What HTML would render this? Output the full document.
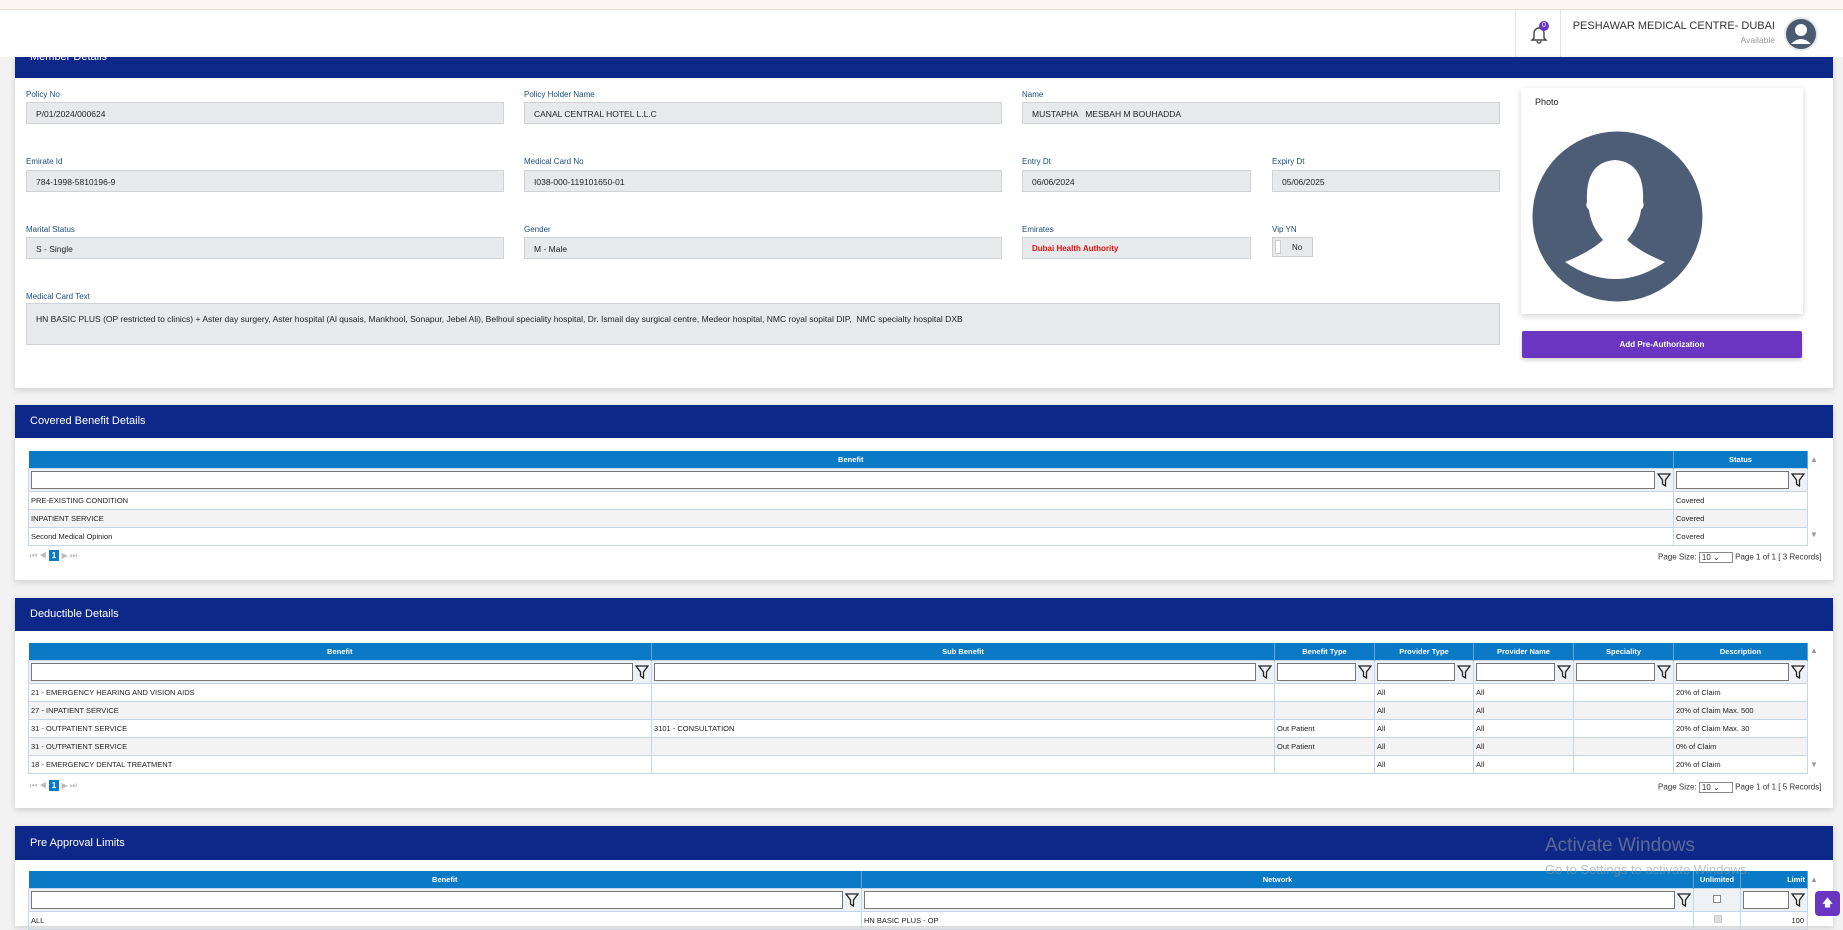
<!DOCTYPE html>
<html><head><meta charset="utf-8"><style>
*{box-sizing:border-box;margin:0;padding:0}
body{width:1843px;height:926px;overflow:hidden;background:#f2f2f2;font-family:"Liberation Sans",sans-serif;position:relative;color:#222}
.a{position:absolute}
.card{position:absolute;left:15px;width:1818px;background:#fff;box-shadow:0 2px 6px rgba(0,0,0,.15)}
.hd{position:absolute;left:15px;width:1818px;background:#0e288a;color:#fff;font-size:11px;padding-left:15px}
.lbl{position:absolute;font-size:8px;color:#1d4f7a}
.inp{position:absolute;height:22px;background:#e8e9eb;border:1px solid #cfd3d8;font-size:8.5px;padding:6px 9px;color:#222;white-space:nowrap}
table{position:absolute;border-collapse:collapse;table-layout:fixed;font-size:7.5px}
th{background:#0a7ac6;color:#fff;font-size:7.5px;height:17px;border-right:1px solid #5ea6dc;font-weight:bold}
td{border:1px solid #c4d6ea;height:18px;padding-left:2px;white-space:nowrap;overflow:hidden}
tr.f td{background:#eef2f6;height:22px;padding:2px}
tr.g td{background:#f3f3f3}
.fi{display:flex;align-items:center;gap:2px}
.fi span{flex:1;height:18px;border:1px solid #777;background:#fff}
.fi svg{width:14px;height:14px}
.pg{position:absolute;font-size:8px;color:#333}
.sel{display:inline-block;width:34px;height:11px;border:1px solid #888;vertical-align:middle;font-size:8px;padding-left:2px}
</style></head><body>
<div class="a" style="left:0;top:0;width:1843px;height:10px;background:#fdf5f3;border-bottom:1px solid #f0dcd6"></div>
<div class="a" style="left:0;top:10px;width:1843px;height:47px;background:#fff"></div>
<div class="a" style="left:1515px;top:10px;width:1px;height:47px;background:#e3e3e3"></div>
<div class="a" style="left:1560px;top:10px;width:1px;height:47px;background:#e3e3e3"></div>
<svg class="a" style="left:1530px;top:24px" width="18" height="20" viewBox="0 0 18 20"><path d="M4 14V9a5 5 0 0 1 10 0v5l2 2H2z M7 17a2 2 0 0 0 4 0" fill="none" stroke="#444" stroke-width="1.4"/></svg>
<div class="a" style="left:1539px;top:21px;width:10px;height:10px;border-radius:50%;background:#6a35c0;color:#fff;font-size:7px;text-align:center;line-height:10px">0</div>
<div class="a" style="left:1540px;top:20px;width:235px;text-align:right;font-size:11px;color:#333;white-space:nowrap">PESHAWAR MEDICAL CENTRE- DUBAI</div>
<div class="a" style="left:1677px;top:35px;width:98px;text-align:right;font-size:8.5px;color:#999">Available</div>
<svg class="a" style="left:1784px;top:17px" width="34" height="34" viewBox="0 0 34 34"><circle cx="17" cy="17" r="16" fill="#4a5a70" stroke="#e6e6e6" stroke-width="2"/><circle cx="17" cy="13" r="6" fill="#fff"/><path d="M7 27q10-10 20 0" fill="#fff"/></svg>

<div class="card" style="top:57px;height:331px"></div>
<div class="hd" style="top:57px;height:21px;overflow:hidden"><span style="position:relative;top:-6px;display:block;line-height:12px">Member Details</span></div>
<div class="lbl" style="left:26px;top:90px">Policy No</div><div class="inp" style="left:26px;top:102px;width:478px">P/01/2024/000624</div>
<div class="lbl" style="left:524px;top:90px">Policy Holder Name</div><div class="inp" style="left:524px;top:102px;width:478px">CANAL CENTRAL HOTEL L.L.C</div>
<div class="lbl" style="left:1022px;top:90px">Name</div><div class="inp" style="left:1022px;top:102px;width:478px">MUSTAPHA &nbsp; MESBAH M BOUHADDA</div>
<div class="lbl" style="left:26px;top:157px">Emirate Id</div><div class="inp" style="left:26px;top:170px;width:478px">784-1998-5810196-9</div>
<div class="lbl" style="left:524px;top:157px">Medical Card No</div><div class="inp" style="left:524px;top:170px;width:478px">I038-000-119101650-01</div>
<div class="lbl" style="left:1022px;top:157px">Entry Dt</div><div class="inp" style="left:1022px;top:170px;width:229px">06/06/2024</div>
<div class="lbl" style="left:1272px;top:157px">Expiry Dt</div><div class="inp" style="left:1272px;top:170px;width:228px">05/06/2025</div>
<div class="lbl" style="left:26px;top:225px">Marital Status</div><div class="inp" style="left:26px;top:237px;width:478px">S - Single</div>
<div class="lbl" style="left:524px;top:225px">Gender</div><div class="inp" style="left:524px;top:237px;width:478px">M - Male</div>
<div class="lbl" style="left:1022px;top:225px">Emirates</div><div class="inp" style="left:1022px;top:237px;width:229px;color:#e01010;font-weight:bold;font-size:8px">Dubai Health Authority</div>
<div class="lbl" style="left:1272px;top:225px">Vip YN</div>
<div class="a" style="left:1272px;top:237px;width:41px;height:20px;border:1px solid #ccc;background:#e8e9eb;font-size:8px;padding:5px 0 0 19px">No<span class="a" style="left:2px;top:2px;width:6px;height:14px;background:#fff;border:1px solid #ccc"></span></div>
<div class="lbl" style="left:26px;top:292px">Medical Card Text</div>
<div class="inp" style="left:26px;top:303px;width:1474px;height:42px;padding-top:10px">HN BASIC PLUS (OP restricted to clinics) + Aster day surgery, Aster hospital (Al qusais, Mankhool, Sonapur, Jebel Ali), Belhoul speciality hospital, Dr. Ismail day surgical centre, Medeor hospital, NMC royal sopital DIP, &nbsp;NMC specialty hospital DXB</div>
<div class="a" style="left:1521px;top:88px;width:282px;height:226px;background:#fff;box-shadow:0 2px 6px rgba(0,0,0,.18)"></div>
<div class="a" style="left:1535px;top:97px;font-size:9px">Photo</div>
<svg class="a" style="left:1532px;top:131px" width="171" height="171" viewBox="0 0 171 171"><circle cx="85.5" cy="85.5" r="85" fill="#4c5d75"/><path d="M33 131q25-10 38-22q-12-14-14-30q-4-4-2-8q-2-40 28-42q30 2 28 42q2 4-2 8q-2 16-14 30q13 12 38 22q-50 34-100 0z" fill="#fff"/></svg>
<div class="a" style="left:1522px;top:331px;width:280px;height:27px;background:#6a35c0;color:#fff;font-size:8px;font-weight:bold;text-align:center;line-height:27px;border-radius:2px;box-shadow:0 2px 4px rgba(0,0,0,.2)">Add Pre-Authorization</div>

<!-- Covered -->
<div class="card" style="top:405px;height:175px"></div>
<div class="hd" style="top:405px;height:33px;line-height:33px">Covered Benefit Details</div>
<table style="left:28px;top:451px;width:1779px">
<colgroup><col style="width:1645px"><col style="width:134px"></colgroup>
<tr><th>Benefit</th><th>Status</th></tr>
<tr class="f"><td><div class="fi"><span></span><svg viewBox="0 0 14 14"><path d="M1 1h12L8.5 7v6L5.5 11V7z" fill="none" stroke="#222" stroke-width="1.3"/></svg></div></td><td><div class="fi"><span></span><svg viewBox="0 0 14 14"><path d="M1 1h12L8.5 7v6L5.5 11V7z" fill="none" stroke="#222" stroke-width="1.3"/></svg></div></td></tr>
<tr><td>PRE-EXISTING CONDITION</td><td>Covered</td></tr>
<tr class="g"><td>INPATIENT SERVICE</td><td>Covered</td></tr>
<tr><td>Second Medical Opinion</td><td>Covered</td></tr>
</table>
<div class="a" style="left:1810px;top:455px;font-size:8px;color:#999">▲</div>
<div class="a" style="left:1810px;top:530px;font-size:8px;color:#999">▼</div>
<div class="pg" style="left:30px;top:551px;color:#bbb">⏮ ◀ <span style="background:#0a7ac6;color:#fff;padding:1px 3px;font-weight:bold">1</span> ▶ ⏭</div>
<div class="pg" style="left:1658px;top:552px">Page Size: <span class="sel">10 ⌄</span> Page 1 of 1 [ 3 Records]</div>

<!-- Deductible -->
<div class="card" style="top:598px;height:210px"></div>
<div class="hd" style="top:598px;height:33px;line-height:33px">Deductible Details</div>
<table style="left:28px;top:643px;width:1779px">
<colgroup><col style="width:623px"><col style="width:623px"><col style="width:100px"><col style="width:99px"><col style="width:100px"><col style="width:100px"><col style="width:134px"></colgroup>
<tr><th>Benefit</th><th>Sub Benefit</th><th>Benefit Type</th><th>Provider Type</th><th>Provider Name</th><th>Speciality</th><th>Description</th></tr>
<tr class="f"><td><div class="fi"><span></span><svg viewBox="0 0 14 14"><path d="M1 1h12L8.5 7v6L5.5 11V7z" fill="none" stroke="#222" stroke-width="1.3"/></svg></div></td><td><div class="fi"><span></span><svg viewBox="0 0 14 14"><path d="M1 1h12L8.5 7v6L5.5 11V7z" fill="none" stroke="#222" stroke-width="1.3"/></svg></div></td><td><div class="fi"><span></span><svg viewBox="0 0 14 14"><path d="M1 1h12L8.5 7v6L5.5 11V7z" fill="none" stroke="#222" stroke-width="1.3"/></svg></div></td><td><div class="fi"><span></span><svg viewBox="0 0 14 14"><path d="M1 1h12L8.5 7v6L5.5 11V7z" fill="none" stroke="#222" stroke-width="1.3"/></svg></div></td><td><div class="fi"><span></span><svg viewBox="0 0 14 14"><path d="M1 1h12L8.5 7v6L5.5 11V7z" fill="none" stroke="#222" stroke-width="1.3"/></svg></div></td><td><div class="fi"><span></span><svg viewBox="0 0 14 14"><path d="M1 1h12L8.5 7v6L5.5 11V7z" fill="none" stroke="#222" stroke-width="1.3"/></svg></div></td><td><div class="fi"><span></span><svg viewBox="0 0 14 14"><path d="M1 1h12L8.5 7v6L5.5 11V7z" fill="none" stroke="#222" stroke-width="1.3"/></svg></div></td></tr>
<tr><td>21 - EMERGENCY HEARING AND VISION AIDS</td><td></td><td></td><td>All</td><td>All</td><td></td><td>20% of Claim</td></tr>
<tr class="g"><td>27 - INPATIENT SERVICE</td><td></td><td></td><td>All</td><td>All</td><td></td><td>20% of Claim Max. 500</td></tr>
<tr><td>31 - OUTPATIENT SERVICE</td><td>3101 - CONSULTATION</td><td>Out Patient</td><td>All</td><td>All</td><td></td><td>20% of Claim Max. 30</td></tr>
<tr class="g"><td>31 - OUTPATIENT SERVICE</td><td></td><td>Out Patient</td><td>All</td><td>All</td><td></td><td>0% of Claim</td></tr>
<tr><td>18 - EMERGENCY DENTAL TREATMENT</td><td></td><td></td><td>All</td><td>All</td><td></td><td>20% of Claim</td></tr>
</table>
<div class="a" style="left:1810px;top:646px;font-size:8px;color:#999">▲</div>
<div class="a" style="left:1810px;top:760px;font-size:8px;color:#999">▼</div>
<div class="pg" style="left:30px;top:781px;color:#bbb">⏮ ◀ <span style="background:#0a7ac6;color:#fff;padding:1px 3px;font-weight:bold">1</span> ▶ ⏭</div>
<div class="pg" style="left:1658px;top:782px">Page Size: <span class="sel">10 ⌄</span> Page 1 of 1 [ 5 Records]</div>

<!-- Pre approval -->
<div class="card" style="top:826px;height:100px"></div>
<div class="hd" style="top:826px;height:34px;line-height:34px">Pre Approval Limits</div>
<table style="left:28px;top:871px;width:1779px">
<colgroup><col style="width:833px"><col style="width:832px"><col style="width:47px"><col style="width:67px"></colgroup>
<tr><th>Benefit</th><th>Network</th><th>Unlimited</th><th style="text-align:right;padding-right:2px">Limit</th></tr>
<tr class="f"><td><div class="fi"><span></span><svg viewBox="0 0 14 14"><path d="M1 1h12L8.5 7v6L5.5 11V7z" fill="none" stroke="#222" stroke-width="1.3"/></svg></div></td><td><div class="fi"><span></span><svg viewBox="0 0 14 14"><path d="M1 1h12L8.5 7v6L5.5 11V7z" fill="none" stroke="#222" stroke-width="1.3"/></svg></div></td><td style="text-align:center"><span style="display:inline-block;width:8px;height:8px;border:1px solid #888;background:#fff"></span></td><td><div class="fi"><span></span><svg viewBox="0 0 14 14"><path d="M1 1h12L8.5 7v6L5.5 11V7z" fill="none" stroke="#222" stroke-width="1.3"/></svg></div></td></tr>
<tr><td>ALL</td><td>HN BASIC PLUS - OP</td><td style="text-align:center"><span style="display:inline-block;width:8px;height:8px;border:1px solid #ccc;background:#ddd"></span></td><td style="text-align:right;padding-right:3px">100</td></tr>
</table>
<div class="a" style="left:1810px;top:875px;font-size:8px;color:#999">▲</div>
<div class="a" style="left:1545px;top:835px;font-size:19px;color:rgba(120,130,145,.75)">Activate Windows</div>
<div class="a" style="left:1545px;top:862px;font-size:13px;color:rgba(140,150,160,.6)">Go to Settings to activate Windows.</div>
<div class="a" style="left:1815px;top:891px;width:25px;height:25px;border-radius:4px;background:#6a35c0;color:#fff;text-align:center;line-height:25px;font-size:11px">🡅</div>
</body></html>
